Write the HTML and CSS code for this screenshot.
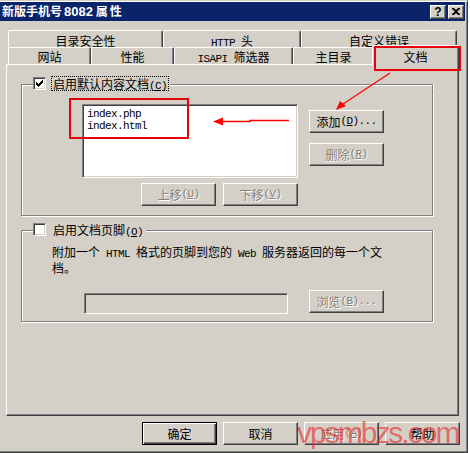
FILE: index.html
```html
<!DOCTYPE html>
<html lang="zh-CN">
<head>
<meta charset="utf-8">
<title>新版手机号8082 属性</title>
<link rel="stylesheet" href="styles.css">
</head>
<body>
<div class="win">
  <div class="titlebar">
    <span class="title">新版手机号<span class="num">8082</span> <span class="wide">属性</span></span>
    <div class="tbtns">
      <span class="tbtn q">?</span>
      <span class="tbtn x"><svg width="8" height="7" viewBox="0 0 8 7"><path d="M0 0h2l2 2 2-2h2v1L5 3.5 8 6v1H6L4 5 2 7H0V6l3-2.5L0 1z" fill="#000"/></svg></span>
    </div>
  </div>

  <div class="content">
    <div class="tabs">
      <div class="tabrow back">
        <div class="tab tb1">目录安全性</div>
        <div class="tab tb2"><span class="a">HTTP </span>头</div>
        <div class="tab tb3">自定义错误</div>
      </div>
      <div class="tabrow front">
        <div class="tab tf1">网站</div>
        <div class="tab tf2">性能</div>
        <div class="tab tf3"><span class="a">ISAPI </span>筛选器</div>
        <div class="tab tf4">主目录</div>
        <div class="tab tf5 sel">文档</div>
      </div>
    </div>

    <div class="panel">
      <div class="group g1">
        <div class="ghead">
          <span class="gl"></span>
          <span class="check on"><svg width="7" height="7" viewBox="0 0 7 7"><path d="M0 2h1v1h1v1h1v-1h1v-1h1v-1h1v-1h1v3h-1v1h-1v1h-1v1h-1v1h-1v-1h-1v-1h-1v-1h-1z" fill="#000"/></svg></span>
          <span class="legend focus">启用默认内容文档<span class="a">(<u>C</u>)</span></span>
          <span class="gr"></span>
        </div>
        <div class="gbody">
          <div class="listrow">
            <div class="list">
              <div class="item">index.php</div>
              <div class="item">index.html</div>
            </div>
            <div class="sidebtns">
              <div class="btn">添加<span class="a">(<u>D</u>)...</span></div>
              <div class="btn dis">删除<span class="a">(<u>R</u>)</span></div>
            </div>
          </div>
          <div class="moverow">
            <div class="btn dis">上移<span class="a">(<u>U</u>)</span></div>
            <div class="btn dis">下移<span class="a">(<u>V</u>)</span></div>
          </div>
        </div>
      </div>

      <div class="group g2">
        <div class="ghead">
          <span class="gl"></span>
          <span class="check"></span>
          <span class="legend">启用文档页脚<span class="a">(<u>O</u>)</span></span>
          <span class="gr"></span>
        </div>
        <div class="gbody">
          <p class="desc">附加一个<span class="a"> HTML </span>格式的页脚到您的<span class="a"> Web </span>服务器返回的每一个文<br>档。</p>
          <div class="browserow">
            <div class="field"></div>
            <div class="btn dis">浏览<span class="a">(<u>B</u>)...</span></div>
          </div>
        </div>
      </div>
    </div>

    <div class="footer">
      <div class="btn def">确定</div>
      <div class="btn">取消</div>
      <div class="btn dis">应用<span class="a">(<u>A</u>)</span></div>
      <div class="btn">帮助</div>
    </div>
  </div>

  <svg class="annot" width="470" height="453" viewBox="0 0 470 453">
    <rect x="375" y="46" width="85" height="23" fill="none" stroke="#e8000b" stroke-width="2"/>
    <rect x="70" y="98" width="118" height="39" fill="none" stroke="#e8000b" stroke-width="2"/>
    <path d="M289 119.5H250v1H221" fill="none" stroke="#f00" stroke-width="1.6"/>
    <path d="M213 120.5l10-4v8z" fill="#f00"/>
    <path d="M390 72L343 103" fill="none" stroke="#f00" stroke-width="1.3"/>
    <path d="M336 109l4-9 6 5z" fill="#f00"/>
  </svg>
  <div class="watermark">vpsmbzs.com</div>
</div>
</body>
</html>
```

FILE: styles.css
```css
* { box-sizing: border-box; }

html, body {
  margin: 0;
  padding: 0;
}

body {
  width: 470px;
  height: 453px;
  overflow: hidden;
  background: #ffffff;
  font-family: "Noto Sans CJK SC", "Liberation Sans", sans-serif;
  font-size: 12px;
  line-height: 13px;
  color: #000;
}

.a {
  font-family: "Liberation Mono", monospace;
  font-size: 11px;
  letter-spacing: -0.6px;
}

.win {
  position: relative;
  width: 468px;
  height: 453px;
  background: #d4d0c8;
  border-top: 1px solid #d4d0c8;
  border-right: 1px solid #404040;
  border-bottom: 1px solid #404040;
  box-shadow: inset 0 1px #ffffff, inset -1px -1px #808080;
  padding-top: 1px;
}

/* title bar */
.titlebar {
  height: 19px;
  width: 465px;
  background: #0a246a;
  display: flex;
  align-items: center;
  justify-content: space-between;
  padding: 0 1px 0 2px;
}

.title {
  color: #fff;
  font-weight: bold;
  font-size: 12px;
  line-height: 14px;
  white-space: nowrap;
}

.title .num {
  font-family: "Liberation Sans", sans-serif;
  font-weight: bold;
  font-size: 13px;
  margin-left: 2px;
}

.title .wide {
  letter-spacing: 2px;
}

.tbtns {
  display: flex;
  gap: 2px;
}

.tbtn {
  width: 16px;
  height: 14px;
  background: #d4d0c8;
  border: 1px solid;
  border-color: #fff #404040 #404040 #fff;
  box-shadow: inset -1px -1px #808080;
  display: flex;
  align-items: center;
  justify-content: center;
  font-family: "Liberation Sans", sans-serif;
  font-weight: bold;
  font-size: 12px;
  line-height: 12px;
  color: #000;
}

.content {
  padding-left: 6px;
}

/* tabs */
.tabs {
  margin: 9px 0 0 2px;
  width: 449px;
}

.tabrow {
  display: flex;
  height: 17px;
}

.tab {
  flex: none;
  height: 17px;
  background: #d4d0c8;
  border-top: 1px solid #fff;
  border-left: 1px solid #fff;
  border-right: 1px solid #404040;
  border-radius: 2px 2px 0 0;
  box-shadow: inset -1px 0 #808080;
  text-align: center;
  padding-top: 2px;
  line-height: 13px;
}

.back .tab { padding-top: 3px; }

.tb1 { width: 155px; }
.tb2 { width: 138px; }
.tb3 { width: 156px; }

.tf1 { width: 83px; }
.tf2 { width: 83px; }
.tf3 { width: 119px; }
.tf4 { width: 81px; }
.tf5 { width: 83px; }

.front .tab.sel {
  position: relative;
  z-index: 2;
  width: 87px;
  height: 21px;
  margin: -2px -2px 0 -2px;
  padding-top: 4px;
}

/* panel */
.panel {
  position: relative;
  z-index: 1;
  width: 453px;
  height: 352px;
  border-top: 1px solid #fff;
  border-left: 1px solid #fff;
  border-right: 1px solid #404040;
  border-bottom: 1px solid #404040;
  box-shadow: inset -1px -1px #808080;
  padding: 11px 0 0 14px;
}

/* group boxes */
.group {
  width: 413px;
}

.ghead {
  display: flex;
  align-items: flex-start;
  height: 15px;
  width: 412px;
}

.gl {
  flex: none;
  width: 12px;
  height: 7px;
  margin-top: 8px;
  border-top: 1px solid #808080;
  border-left: 1px solid #808080;
  box-shadow: inset 1px 1px #fff;
}

.gr {
  flex: 1;
  height: 7px;
  margin-top: 8px;
  margin-left: 1px;
  border-top: 1px solid #808080;
  border-right: 1px solid #808080;
  box-shadow: inset 0 1px #fff, 1px 0 #fff;
}

.check {
  flex: none;
  width: 13px;
  height: 13px;
  margin-top: 1px;
  background: #fff;
  border: 1px solid;
  border-color: #808080 #fff #fff #808080;
  box-shadow: inset 1px 1px #404040, inset -1px -1px #d4d0c8;
  display: flex;
  align-items: center;
  justify-content: center;
}

.check svg { display: block; }

.legend {
  flex: none;
  margin-left: 5px;
  padding: 0 1px 0 1px;
  height: 15px;
  line-height: 13px;
  border: 1px solid transparent;
  white-space: nowrap;
}

.legend.focus {
  border: 1px dotted #000;
}

.gbody {
  width: 412px;
  border-left: 1px solid #808080;
  border-right: 1px solid #808080;
  border-bottom: 1px solid #808080;
  box-shadow: inset 1px 0 #fff, 1px 1px #fff;
}

.g1 .gbody {
  height: 125px;
  padding: 13px 0 0 60px;
}

.g2 {
  margin-top: 6px;
}

.g2 .gbody {
  height: 85px;
  padding: 8px 0 0 30px;
}

/* list */
.listrow {
  display: flex;
  align-items: flex-start;
}

.list {
  width: 216px;
  height: 74px;
  background: #fff;
  border: 1px solid;
  border-color: #808080 #fff #fff #808080;
  box-shadow: inset 1px 1px #404040, inset -1px -1px #d4d0c8;
  padding: 3px 0 0 4px;
  font-family: "Liberation Mono", monospace;
  font-size: 11px;
  letter-spacing: -0.6px;
  line-height: 12px;
}

.sidebtns {
  margin: 6px 0 0 11px;
  display: flex;
  flex-direction: column;
  gap: 10px;
}

.moverow {
  width: 216px;
  margin-top: 5px;
  display: flex;
  justify-content: flex-end;
  gap: 7px;
}

/* buttons */
.btn {
  flex: none;
  width: 75px;
  height: 23px;
  background: #d4d0c8;
  border: 1px solid;
  border-color: #fff #404040 #404040 #fff;
  box-shadow: inset -1px -1px #808080;
  display: flex;
  align-items: center;
  justify-content: center;
  line-height: 13px;
  white-space: nowrap;
}

.btn.dis {
  color: #808080;
  text-shadow: 1px 1px 0 #fff;
}

.btn.def {
  border-color: #000;
  box-shadow: inset 1px 1px #fff, inset -1px -1px #404040, inset -2px -2px #808080;
}

/* footer text group */
.desc {
  margin: 0;
  width: 360px;
  line-height: 13px;
}

.browserow {
  display: flex;
  align-items: flex-start;
  margin: 16px 0 0 32px;
  gap: 21px;
}

.field {
  width: 204px;
  height: 21px;
  margin-top: 3px;
  background: #d4d0c8;
  border: 1px solid;
  border-color: #808080 #fff #fff #808080;
  box-shadow: inset 1px 1px #404040, inset -1px -1px #d4d0c8;
}

/* bottom buttons */
.footer {
  width: 454px;
  margin-top: 6px;
  display: flex;
  justify-content: flex-end;
  gap: 6px;
}

/* overlays */
.annot {
  position: absolute;
  left: 0;
  top: 0;
  pointer-events: none;
  z-index: 5;
}

.watermark {
  position: absolute;
  left: 297px;
  top: 417px;
  z-index: 6;
  font-family: "Liberation Sans", sans-serif;
  font-size: 30px;
  line-height: 30px;
  letter-spacing: -2px;
  color: rgba(232, 40, 40, 0.62);
  pointer-events: none;
  white-space: nowrap;
}
```
